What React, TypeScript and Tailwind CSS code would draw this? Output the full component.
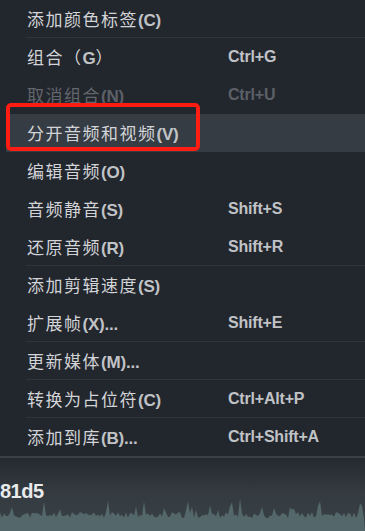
import React from "react";

interface MenuItem {
  label: string;
  shortcut?: string;
  disabled?: boolean;
  active?: boolean;
  divider?: boolean;
}

const items: MenuItem[] = [
  { label: "添加颜色标签(C)", divider: true },
  { label: "组合（G）", shortcut: "Ctrl+G" },
  { label: "取消组合(N)", shortcut: "Ctrl+U", disabled: true },
  { label: "分开音频和视频(V)", active: true },
  { label: "编辑音频(O)" },
  { label: "音频静音(S)", shortcut: "Shift+S" },
  { label: "还原音频(R)", shortcut: "Shift+R", divider: true },
  { label: "添加剪辑速度(S)" },
  { label: "扩展帧(X)...", shortcut: "Shift+E", divider: true },
  { label: "更新媒体(M)...", divider: true },
  { label: "转换为占位符(C)", shortcut: "Ctrl+Alt+P", divider: true },
  { label: "添加到库(B)...", shortcut: "Ctrl+Shift+A" },
];

// latin runs get the bolder face, CJK stays regular
function Label({ text }: { text: string }) {
  const parts = text.split(/([\x20-\x7e]+)/).filter(Boolean);
  return (
    <>
      {parts.map((p, i) =>
        /^[\x20-\x7e]+$/.test(p) ? (
          <span key={i} className="font-bold font-['Liberation_Sans'] tracking-[-0.2px] opacity-90">
            {p}
          </span>
        ) : (
          <span key={i} className="tracking-[1.5px]">{p}</span>
        )
      )}
    </>
  );
}

function Waveform() {
  const pts: string[] = [];
  let seed = 11;
  const rnd = () => {
    seed = (seed * 9301 + 49297) % 233280;
    return seed / 233280;
  };
  for (let x = 0; x <= 365; x += 2) {
    const spike = rnd() > 0.86 ? 4 + rnd() * 10 : 0;
    const y = 27 - rnd() * 6 - spike;
    pts.push(`${x},${y.toFixed(1)}`);
  }
  return (
    <svg width="365" height="40" viewBox="0 0 365 40" className="block">
      <polygon points={`0,40 ${pts.join(" ")} 365,40`} fill="#54676b" />
    </svg>
  );
}

export default function App() {
  return (
    <div className="w-[365px] h-[531px] overflow-hidden bg-[#22262d] font-['Noto_Sans_CJK_SC','Liberation_Sans',sans-serif] relative">
      <div className="flex flex-col">
        {items.map((item) => (
          <div key={item.label} className="flex flex-col">
            <div
              className={`h-[38px] flex items-center text-[17px] ${
                item.active ? "bg-[#363c44] ml-[6px] pl-[21px]" : "pl-[27px]"
              } ${item.disabled ? "text-[#62676e]" : "text-[#d2d4d7]"}`}
            >
              <span className="w-[201px] shrink-0 whitespace-nowrap leading-none">
                <Label text={item.label} />
              </span>
              {item.shortcut && (
                <span className="font-['Liberation_Sans'] font-bold text-[16px] tracking-[-0.2px] leading-none opacity-90">
                  {item.shortcut}
                </span>
              )}
            </div>
            {item.divider && <div className="h-px ml-[26px] bg-[#30353d] -mt-px" />}
          </div>
        ))}
      </div>

      {/* timeline strip under the menu */}
      <div className="h-[2px] bg-[#3a4145]" />
      <div className="h-[73px] bg-gradient-to-b from-[#252a30] via-[#343b41] to-[#394147] flex flex-col justify-end relative">
        <span className="absolute left-0 top-[23px] text-[20px] font-bold text-[#e8eaec] font-['Liberation_Sans'] leading-none tracking-[-0.5px]">
          81d5
        </span>
        <Waveform />
      </div>

      <div className="absolute left-[6px] top-[103px] w-[194px] h-[48px] border-[4px] border-[#ff1c12] rounded-[5px]" />
    </div>
  );
}
